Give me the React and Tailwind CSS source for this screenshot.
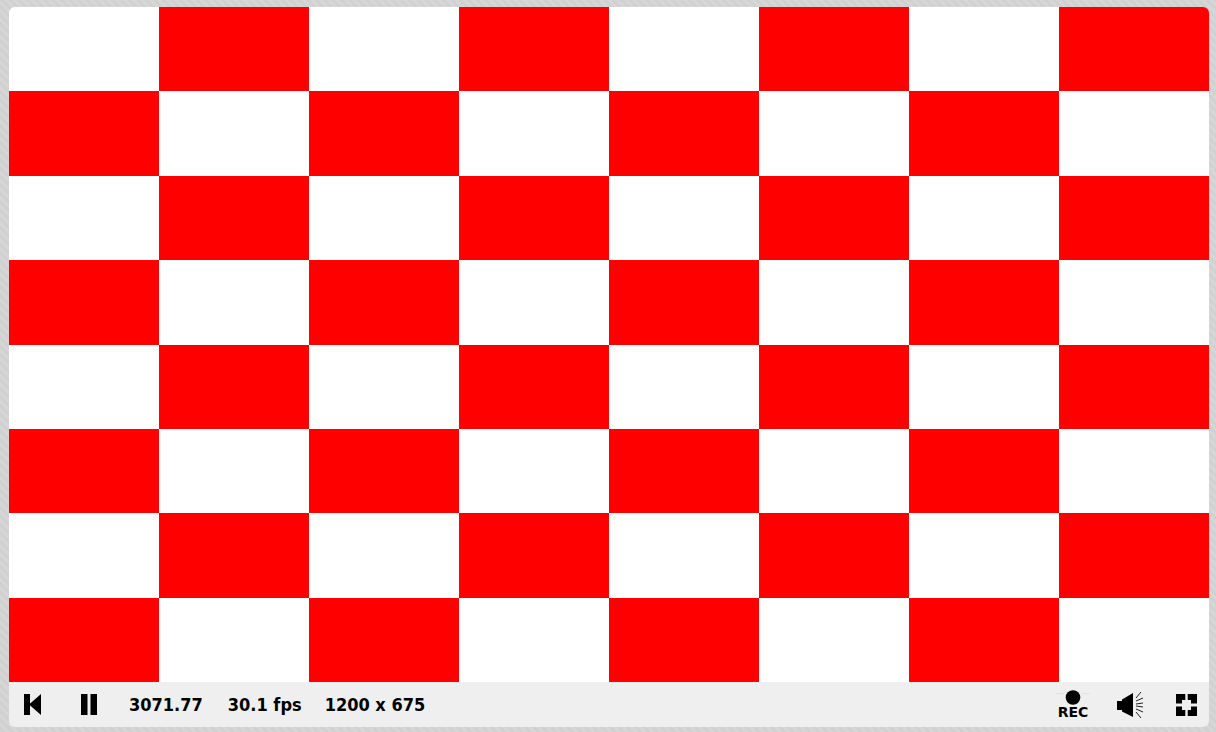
import { Fragment } from "react";

const ROWS = [0, 1, 2, 3, 4, 5, 6, 7];
const COLS = [0, 1, 2, 3, 4, 5, 6, 7];

const Board = () => (
  <div className="grid grid-cols-8 grid-rows-8 h-[675px]">
    {ROWS.map((r) => (
      <Fragment key={r}>
        {COLS.map((c) => (
          <div key={c} className={(r + c) % 2 === 0 ? "bg-white" : "bg-[#ff0000]"} />
        ))}
      </Fragment>
    ))}
  </div>
);

const RewindIcon = () => (
  <svg width="18" height="21" viewBox="0 0 18 21" className="block blur-[0.4px]">
    <rect x="0" y="0" width="6" height="21" fill="#000" />
    <polygon points="5,10.5 17,0 17,21" fill="#000" />
  </svg>
);

const PauseIcon = () => (
  <svg width="16" height="21" viewBox="0 0 16 21" className="block blur-[0.4px]">
    <rect x="0" y="0" width="6.5" height="21" fill="#000" />
    <rect x="9.5" y="0" width="6.5" height="21" fill="#000" />
  </svg>
);

const RecDot = () => (
  <svg width="34" height="15" viewBox="0 0 34 15" className="block">
    <path d="M0 3.5H9M25 3.5H34" stroke="#e4e4e4" strokeWidth="1" />
    <circle cx="17" cy="7.5" r="7.3" fill="#000" className="blur-[0.3px]" />
  </svg>
);

const SoundIcon = () => (
  <svg width="28" height="28" viewBox="0 0 28 28" className="block blur-[0.3px]">
    <rect x="1" y="10" width="5" height="9" fill="#000" />
    <polygon points="6,8.5 17,2 17,26 6,20.5" fill="#000" />
    <g stroke="#222" strokeWidth="1" fill="none">
      <path d="M20 7 L25 1" />
      <path d="M20 10 L27 7" />
      <path d="M20 13 L27 12" />
      <path d="M20 15 L27 16" />
      <path d="M20 18 L27 21" />
      <path d="M20 21 L25 27" />
    </g>
  </svg>
);

const FullscreenIcon = () => (
  <svg width="21" height="22" viewBox="0 0 21 22" className="block blur-[0.3px]">
    <path
      d="M0 0H9.3V6H6V9.5H0ZM11.7 0H21V9.5H15V6H11.7ZM0 12.5H6V16H9.3V22H0ZM15 12.5H21V22H11.7V16H15Z"
      fill="#000"
    />
  </svg>
);

const App = () => {
  return (
    <div className="h-[732px] w-[1216px] overflow-hidden bg-[repeating-linear-gradient(45deg,#d8d8d8_0px,#cfcfcf_3px,#d8d8d8_6px)] pl-[9px] pt-[7px]">
      <div className="w-[1200px] overflow-hidden rounded-[6px]">
        <Board />
        <div className="flex h-[45px] items-center bg-[#efefef] pl-[15px] pr-[12px] font-['DejaVu_Sans_Condensed','DejaVu_Sans',sans-serif] text-[18px] font-bold text-black">
          <RewindIcon />
          <div className="ml-[39px]"><PauseIcon /></div>
          <span className="ml-[32px]">3071.77</span>
          <span className="ml-[25px]">30.1 fps</span>
          <span className="ml-[23px]">1200 x 675</span>
          <div className="ml-auto flex items-center">
            <div className="flex flex-col items-center font-['DejaVu_Sans',sans-serif] text-[14px] leading-[14px]">
              <RecDot />
              <span>REC</span>
            </div>
            <div className="ml-[26px]"><SoundIcon /></div>
            <div className="ml-[32px]"><FullscreenIcon /></div>
          </div>
        </div>
      </div>
    </div>
  );
};

export default App;
